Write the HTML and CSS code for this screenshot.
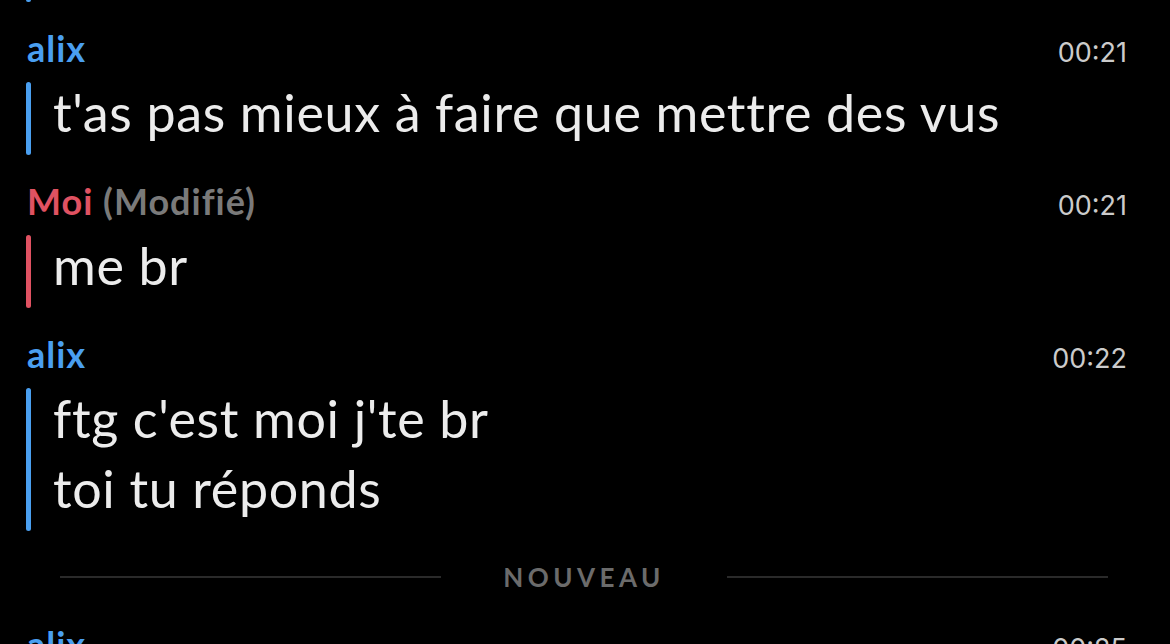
FILE: index.html
```html
<!DOCTYPE html>
<html lang="fr">
<head>
    <meta charset="UTF-8">
    <meta name="viewport" content="width=device-width, initial-scale=1.0">
    <title>Chat</title>
    <link rel="stylesheet" href="styles.css">
</head>
<body>
    <div class="chat">
        <!-- fin du message précédent -->
        <div class="msg">
            <div class="stub blue"></div>
        </div>

        <div class="msg">
            <div class="msg-head">
                <span class="name blue-text">alix</span>
                <span class="time">00:21</span>
            </div>
            <div class="msg-body">
                <span class="bar blue"></span>
                <p class="msg-text">t'as pas mieux à faire que mettre des vus</p>
            </div>
        </div>

        <div class="msg">
            <div class="msg-head">
                <span class="name red-text">Moi <span class="edited">(Modifié)</span></span>
                <span class="time">00:21</span>
            </div>
            <div class="msg-body">
                <span class="bar red"></span>
                <p class="msg-text">me br</p>
            </div>
        </div>

        <div class="msg">
            <div class="msg-head">
                <span class="name blue-text">alix</span>
                <span class="time">00:22</span>
            </div>
            <div class="msg-body">
                <span class="bar blue"></span>
                <p class="msg-text">ftg c'est moi j'te br<br>toi tu réponds</p>
            </div>
        </div>

        <div class="divider">
            <span class="line"></span>
            <span class="divider-label">NOUVEAU</span>
            <span class="line"></span>
        </div>

        <div class="msg">
            <div class="msg-head">
                <span class="name blue-text">alix</span>
                <span class="time">00:25</span>
            </div>
        </div>
    </div>
</body>
</html>
```

FILE: styles.css
```css
* {
    margin: 0;
    padding: 0;
    box-sizing: border-box;
}

body {
    background-color: #000;
    color: #ececec;
    font-family: Lato, "Noto Sans", sans-serif;
    overflow: hidden;
}

.chat {
    display: flex;
    flex-direction: column;
}

/* messages */
.msg {
    padding: 0 43px 0 26px;
}

.stub {
    width: 5px;
    height: 2px;
    border-radius: 0 0 3px 3px;
    margin-bottom: 26px;
}

.msg-head {
    display: flex;
    justify-content: space-between;
    align-items: baseline;
    height: 40px;
    line-height: 40px;
    padding-left: 1px;
}

.name {
    font-size: 36px;
    font-weight: 700;
    letter-spacing: 1px;
}

.edited {
    color: #7a7a7a;
}

.time {
    font-family: Inter, Roboto, sans-serif;
    font-size: 27px;
    color: #cbcbcb;
}

.msg-body {
    display: flex;
    gap: 22px;
    margin: 14px 0 26px;
}

.bar {
    width: 5px;
    border-radius: 3px;
}

.msg-text {
    font-size: 52px;
    line-height: 70px;
    letter-spacing: 0.65px;
    margin: -5px 0 8px;
}

.blue { background-color: #4a9ff0; }
.red { background-color: #e05262; }
.blue-text { color: #4a9ff0; }
.red-text { color: #e05262; }

/* séparateur */
.divider {
    display: flex;
    align-items: center;
    gap: 62px;
    height: 40px;
    padding: 0 62px 0 60px;
    margin-bottom: 27px;
}

.line {
    flex: 1;
    height: 2px;
    background-color: #2a2a2a;
}

.divider-label {
    font-size: 26px;
    font-weight: 700;
    letter-spacing: 4.5px;
    color: #6b6b6b;
}
```
